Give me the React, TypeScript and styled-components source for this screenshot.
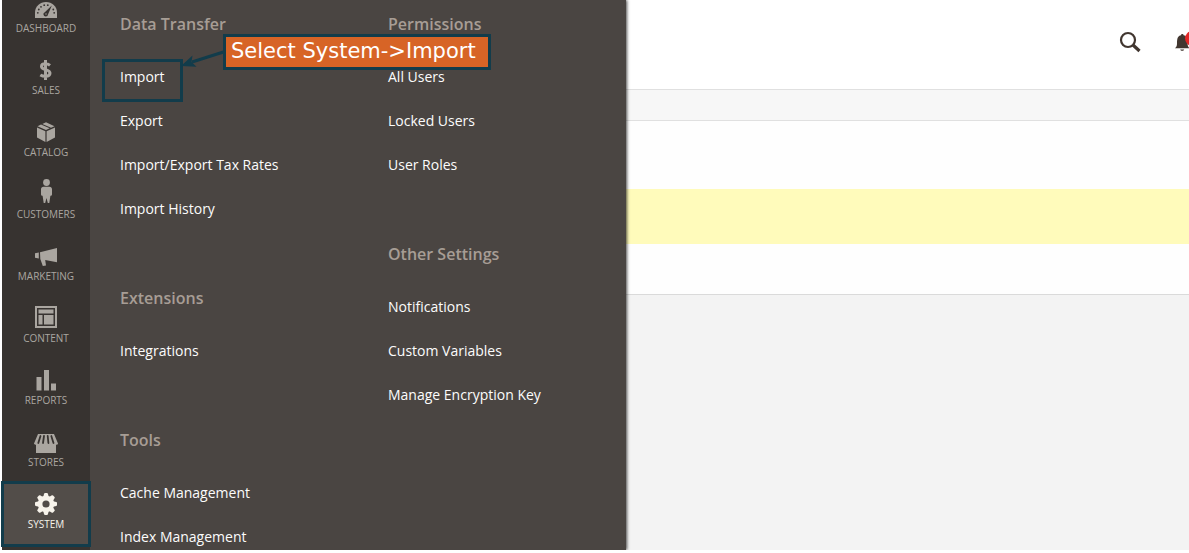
import React from 'react';
import styled, { createGlobalStyle } from 'styled-components';

const accent = '#123c4b';

const GlobalStyle = createGlobalStyle`
  * { box-sizing: border-box; }
  body { margin: 0; background: #fff; font-family: 'Open Sans', sans-serif; }
  ul { list-style: none; margin: 0; padding: 0; }
  a { text-decoration: none; }
`;

const Page = styled.div`
  display: flex;
  height: 100vh;
  overflow: hidden;
  padding-left: 2px;
  border-bottom: 3px solid #fff;
`;

const Sidebar = styled.nav`
  position: relative;
  z-index: 3;
  flex: 0 0 88px;
  background: #373330;
`;

const MainMenu = styled.ul`
  margin-top: -12px;
`;

const MenuLink = styled.a<{ $active?: boolean }>`
  position: relative;
  display: flex;
  flex-direction: column;
  align-items: center;
  height: 62px;
  padding-top: 6px;
  color: ${(p) => (p.$active ? '#f7f3eb' : '#aaa6a0')};
  background: ${(p) => (p.$active ? '#524d49' : 'transparent')};
  font-size: 10px;
  line-height: 12px;
  text-transform: uppercase;
`;

const MenuIcon = styled.svg`
  width: 24px;
  height: 28px;
  overflow: visible;
  fill: currentColor;
`;

const SystemFrame = styled.span`
  position: absolute;
  inset: -3px -1px -1px;
  border: 3px solid ${accent};
`;

const Submenu = styled.section`
  position: relative;
  z-index: 2;
  flex: 0 0 536px;
  display: flex;
  padding: 14px 0 0 30px;
  background: #4a4542;
  box-shadow: 1px 0 3px rgba(0, 0, 0, 0.7);
`;

const Column = styled.div`
  flex: 0 0 268px;

  &:nth-child(2) {
    flex: 1;
    min-width: 0;
  }
`;

const Group = styled.section`
  margin-bottom: 57px;
`;

const GroupTitle = styled.h2`
  margin: 0 0 21px;
  color: #a79d95;
  font-size: 16px;
  font-weight: 600;
  line-height: 20px;
`;

const SubItem = styled.li`
  position: relative;
  height: 44px;
`;

const SubLink = styled.a`
  color: #fcfcfc;
  font-size: 14px;
  line-height: 44px;
`;

const ImportFrame = styled.span`
  position: absolute;
  top: 4px;
  left: -18px;
  width: 81px;
  height: 43px;
  border: 3px solid ${accent};
`;

const Callout = styled.div`
  position: absolute;
  top: 34px;
  left: 133px;
  padding: 0 12px 2px 5px;
  border: 3px solid ${accent};
  background: #d76426;
  color: #fff;
  font-family: 'DejaVu Sans', sans-serif;
  font-size: 21px;
  line-height: 28px;
  white-space: nowrap;
`;

const Arrow = styled.svg`
  position: absolute;
  top: 48px;
  left: 90px;
  width: 46px;
  height: 22px;
`;

const Main = styled.main`
  flex: 1;
  min-width: 0;
  overflow: hidden;
  background: #f3f3f3;
`;

const Header = styled.header`
  display: flex;
  justify-content: flex-end;
  gap: 32px;
  height: 90px;
  padding-top: 30px;
  background: #fff;
  border-bottom: 1px solid #e0e0e0;
`;

const IconButton = styled.button`
  width: 24px;
  height: 24px;
  padding: 0;
  border: 0;
  background: none;
  color: #41362f;

  &:last-child { margin-right: -9px; }

  svg { display: block; overflow: visible; }
`;

const Strip = styled.div`
  height: 31px;
  background: #f7f7f7;
  border-bottom: 1px solid #e0e0e0;
`;

const Panel = styled.section`
  padding: 68px 0 50px;
  background: #fefefe;
  border-bottom: 1px solid #dadada;
`;

const Notice = styled.div`
  height: 55px;
  background: #fffbbb;
`;

const gearTeeth = [0, 45, 90, 135, 180, 225, 270, 315];

const icons: Record<string, React.ReactNode> = {
  Dashboard: (
    <>
      <path d="M1 24V18.500C1 12.500 6 8 12 8s11 4.500 11 10.500V24z" />
      <g fill="#373330">
        <circle cx="3.800" cy="18.800" r="0.900" />
        <circle cx="4.800" cy="15.500" r="0.900" />
        <circle cx="7" cy="12.800" r="0.900" />
        <circle cx="10.200" cy="11.200" r="0.900" />
        <circle cx="13.800" cy="11.200" r="0.900" />
        <circle cx="19.300" cy="15.500" r="0.900" />
        <circle cx="20.200" cy="18.800" r="0.900" />
        <path d="M17.800 11.500L14 20.500a2.300 2.300 0 1 1-3.200-2.300z" />
      </g>
      <circle cx="12" cy="20" r="0.700" />
    </>
  ),
  Sales: (
    <path
      fill="none"
      stroke="currentColor"
      strokeWidth="3"
      d="M16 9.300C14.800 8.300 13.200 7.700 11.300 7.700c-2.300 0-3.800 1-3.800 2.700 0 4 8.500 2.400 8.500 6.700 0 2-1.700 3.200-4.400 3.200-2.200 0-4-.5-5.300-1.300M11.500 4v20"
    />
  ),
  Catalog: (
    <>
      <path d="M3 9.500l8.400 3.700V24L3 19.500zM21 9.500l-8.400 3.700V24l8.400-4.500z" />
      <path d="M3.500 8.200L7 6.600l8.700 3.600-3.700 1.700zM8.300 6L12 4.200l8.500 4-3.500 1.500z" />
    </>
  ),
  Customers: (
    <>
      <circle cx="12.500" cy="2.500" r="3.400" />
      <path d="M9.500 6.700h6c1.500 0 2.500 1 2.500 2.500v5c0 1-.7 1.600-1.600 1.600L15.300 23h-1.500l-1.300-5-1.300 5H9.700L8.600 15.800C7.700 15.800 7 15.200 7 14.200v-5c0-1.500 1-2.500 2.500-2.500z" />
    </>
  ),
  Marketing: (
    <>
      <path d="M6 10.200L23 6v14.200L11.200 18 12 23.500l-3.200.6L6.300 17z" />
      <path d="M1 11.200l3.800-.8v6.200L1 15.800z" />
    </>
  ),
  Content: (
    <>
      <path fillRule="evenodd" d="M1 2h22v22H1zM3 4v18h18V4z" />
      <path d="M4.500 5.500h15v4h-15zM4.500 11h4v9.500h-4zM10 11h9.500v9.500H10z" />
    </>
  ),
  Reports: <path d="M2.500 11h5v13.500h-5zM10 4h5v20.500h-5zM17 17.500h5v7h-5z" />,
  Stores: (
    <>
      <path d="M4 6h16l4 9.500c0 .8-.8 1.200-1.500 1.200H22V25H2v-8.300h-.5C.8 16.700 0 16.300 0 15.500z" />
      <path
        fill="none"
        stroke="#373330"
        strokeWidth="1.800"
        strokeLinecap="round"
        d="M6.500 8L4.300 15M10 8L9 15M13.700 8l.7 7M17.300 8l2.200 7"
      />
    </>
  ),
  System: (
    <>
      <path fillRule="evenodd" d="M12 5.800a8.200 8.200 0 1 0 0 16.400 8.200 8.200 0 0 0 0-16.400zm0 4.600a3.600 3.600 0 1 1 0 7.200 3.600 3.600 0 0 1 0-7.200z" />
      {gearTeeth.map((angle) => (
        <path key={angle} d="M9.200 7l.9-3.300Q10.300 3 11 3h2q.7 0 .9.700l.9 3.300z" transform={`rotate(${angle} 12 14)`} />
      ))}
    </>
  ),
};

const columns = [
  [
    { title: 'Data Transfer', links: ['Import', 'Export', 'Import/Export Tax Rates', 'Import History'] },
    { title: 'Extensions', links: ['Integrations'] },
    { title: 'Tools', links: ['Cache Management', 'Index Management'] },
  ],
  [
    { title: 'Permissions', links: ['All Users', 'Locked Users', 'User Roles'] },
    { title: 'Other Settings', links: ['Notifications', 'Custom Variables', 'Manage Encryption Key'] },
  ],
];

export default function App() {
  return (
    <>
      <GlobalStyle />
      <Page>
        <Sidebar>
          <MainMenu>
            {Object.keys(icons).map((name) => (
              <li key={name}>
                <MenuLink href="#" $active={name === 'System'}>
                  <MenuIcon viewBox="0 0 24 28" aria-hidden="true">
                    {icons[name]}
                  </MenuIcon>
                  <span>{name}</span>
                  {name === 'System' && <SystemFrame />}
                </MenuLink>
              </li>
            ))}
          </MainMenu>
        </Sidebar>

        <Submenu>
          {columns.map((groups, index) => (
            <Column key={index}>
              {groups.map((group) => (
                <Group key={group.title}>
                  <GroupTitle>{group.title}</GroupTitle>
                  <ul>
                    {group.links.map((link) => (
                      <SubItem key={link}>
                        <SubLink href="#">{link}</SubLink>
                        {link === 'Import' && <ImportFrame />}
                      </SubItem>
                    ))}
                  </ul>
                </Group>
              ))}
            </Column>
          ))}
          <Arrow viewBox="0 0 46 22" aria-hidden="true">
            <path d="M45 3.500L12 14" stroke={accent} strokeWidth="3" />
            <path d="M1 18L12.500 7.500 11.500 14 16.500 18.800z" fill={accent} />
          </Arrow>
          <Callout>Select System-&gt;Import</Callout>
        </Submenu>

        <Main>
          <Header>
            <IconButton aria-label="Search">
              <svg width="24" height="24" viewBox="0 0 24 24" fill="none" stroke="currentColor">
                <circle cx="10" cy="10" r="7" strokeWidth="2.200" />
                <path d="M15 15l6.500 6" strokeWidth="3.200" />
              </svg>
            </IconButton>
            <IconButton aria-label="Notifications">
              <svg width="24" height="24" viewBox="0 0 24 24" fill="currentColor">
                <path d="M1 18.200c1.500-1.200 2-2.500 2-5C3 8 4 5.800 7 5.200c0-1.600 2.600-1.600 2.600 0 3 .6 4 2.800 4 8 0 2.500.5 3.800 2 5zM6.200 19.500h4c-.3 1.800-3.700 1.800-4 0z" />
                <circle cx="18.500" cy="8.500" r="7.500" fill="#e22626" />
              </svg>
            </IconButton>
          </Header>
          <Strip />
          <Panel>
            <Notice />
          </Panel>
        </Main>
      </Page>
    </>
  );
}
